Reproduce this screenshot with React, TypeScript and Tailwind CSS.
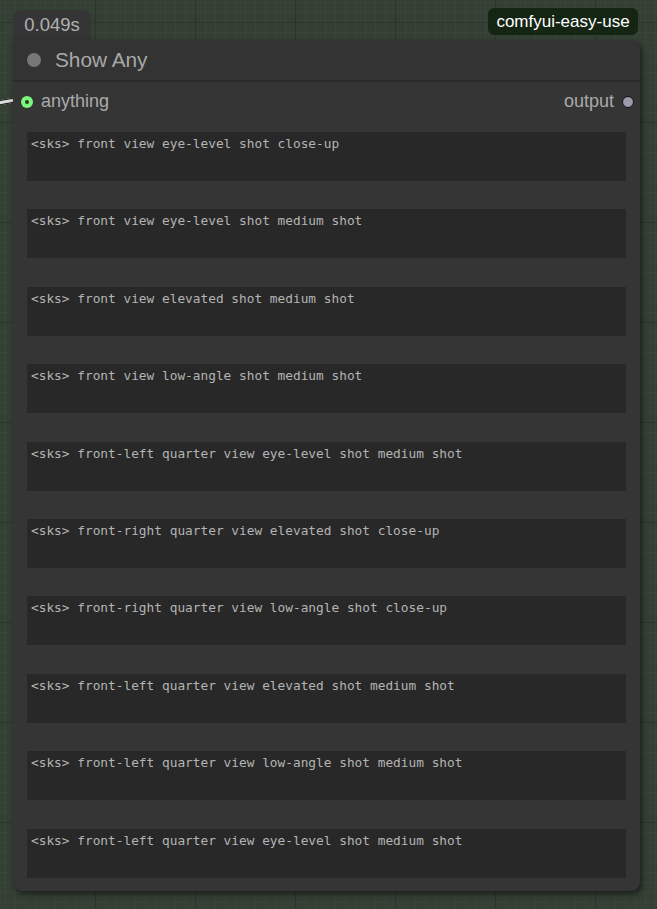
import React from "react";

const lines = [
  "<sks> front view eye-level shot close-up",
  "<sks> front view eye-level shot medium shot",
  "<sks> front view elevated shot medium shot",
  "<sks> front view low-angle shot medium shot",
  "<sks> front-left quarter view eye-level shot medium shot",
  "<sks> front-right quarter view elevated shot close-up",
  "<sks> front-right quarter view low-angle shot close-up",
  "<sks> front-left quarter view elevated shot medium shot",
  "<sks> front-left quarter view low-angle shot medium shot",
  "<sks> front-left quarter view eye-level shot medium shot",
];

export default function App() {
  return (
    <div
      className="relative w-[657px] h-[909px] overflow-hidden bg-[#354035] bg-[linear-gradient(#2c352c_1px,transparent_1px),linear-gradient(90deg,#2c352c_1px,transparent_1px),linear-gradient(#3a453a_1px,transparent_1px),linear-gradient(90deg,#3a453a_1px,transparent_1px)] bg-[size:100px_100px,100px_100px,10px_10px,10px_10px] bg-[position:-5px_22px,-5px_22px,-5px_2px,-5px_2px]"
      style={{ fontFamily: "Arial, 'Liberation Sans', sans-serif" }}
    >
      {/* link wire */}
      <div className="absolute left-[-2px] top-[99px] w-[17px] h-[5px] bg-[#d8dcd8] border-y border-[#111] -rotate-[10deg]" />

      {/* easy-use badge */}
      <div className="absolute left-[488px] top-[8px] h-[27px] w-[150px] rounded-[6px] bg-[#142514] text-white text-[17px] flex items-center justify-center">
        comfyui-easy-use
      </div>

      <div className="absolute left-[13px] top-[10px] w-[627px] flex flex-col">
        {/* timing tab */}
        <div className="w-[78px] h-[30px] rounded-t-[7px] bg-[#353535] text-[#b0b0b0] text-[18.5px] flex items-center justify-center pb-[1px]">
          0.049s
        </div>
        {/* node */}
        <div className="rounded-b-[9px] rounded-tr-[9px] bg-[#353535] shadow-[2px_3px_6px_rgba(0,0,0,0.55)] flex flex-col">
          <div className="h-[42px] flex items-center pl-[14px] gap-[14px] border-b-[2px] border-[#2b2b2b] rounded-tr-[9px] bg-[#333333]">
            <div className="w-[14px] h-[14px] rounded-full bg-[#777777]" />
            <span className="text-[#a8a8a8] text-[20.8px]">Show Any</span>
          </div>
          <div className="h-[39px] flex items-center justify-between pl-[8px] pr-[6px]">
            <div className="flex items-center gap-[8px]">
              <div className="w-[12px] h-[12px] rounded-full bg-[#7cf87c] flex items-center justify-center">
                <div className="w-[4px] h-[4px] rounded-full bg-[#2a3a2a]" />
              </div>
              <span className="text-[#aaaaaa] text-[18px]">anything</span>
            </div>
            <div className="flex items-center gap-[8px]">
              <span className="text-[#aaaaaa] text-[18px]">output</span>
              <div className="w-[12px] h-[12px] rounded-full bg-[#9a9aaa] border border-[#111]" />
            </div>
          </div>
          <div className="flex flex-col gap-[28.4px] px-[14px] pt-[11px] pb-[13px]">
            {lines.map((l, i) => (
              <div
                key={i}
                className="h-[49px] bg-[#282828] text-[#b4b4b4] text-[12.8px] leading-[16px] pl-[4px] pt-[4px] whitespace-pre"
                style={{ fontFamily: "'DejaVu Sans Mono', 'Liberation Mono', monospace" }}
              >
                {l}
              </div>
            ))}
          </div>
        </div>
      </div>
    </div>
  );
}
